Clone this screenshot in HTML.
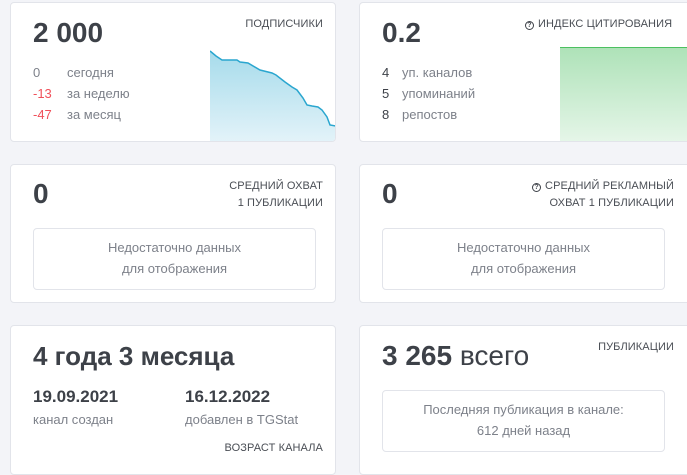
<!DOCTYPE html>
<html><head><meta charset="utf-8"><style>
*{margin:0;padding:0;box-sizing:border-box}
body{width:687px;height:462px;overflow:hidden;background:#f3f4f8;font-family:"Liberation Sans",sans-serif;color:#3d4148;position:relative}
.card{position:absolute;background:#fff;border:1px solid #e2e4ea;border-radius:4px;overflow:hidden}
.a{position:absolute;white-space:nowrap}
.big{font-size:28px;font-weight:bold;color:#3d4148}
.lbl{font-size:11px;color:#4a4e55;text-align:right;line-height:17px;letter-spacing:0.1px}
.g{font-size:13px;color:#7d818a}
.r{color:#f0505a}
.n{font-size:13px;color:#3d4148}
.box{position:absolute;border:1px solid #e2e4ea;border-radius:4px;text-align:center;font-size:13px;color:#7d818a;line-height:21px;padding-top:8px}
.q{display:inline-block;width:9px;height:9px;border:1.3px solid #3d4148;border-radius:50%;font-size:7px;line-height:7px;text-align:center;font-weight:bold;vertical-align:0px;margin-right:4px}
</style></head><body>

<div class="card" style="left:10px;top:2px;width:326px;height:140px">
  <div class="a big" style="left:22px;top:14px">2 000</div>
  <div class="a lbl" style="right:12px;top:13px">ПОДПИСЧИКИ</div>
  <div class="a g" style="left:22px;top:62px">0</div><div class="a g" style="left:56px;top:62px">сегодня</div>
  <div class="a g r" style="left:22px;top:83px">-13</div><div class="a g" style="left:56px;top:83px">за неделю</div>
  <div class="a g r" style="left:22px;top:104px">-47</div><div class="a g" style="left:56px;top:104px">за месяц</div>
  <svg class="a" style="left:199px;top:47px" width="126" height="92" viewBox="210 49 126 92">
    <defs><linearGradient id="b" x1="0" y1="0" x2="0" y2="1"><stop offset="0" stop-color="#a6dbeb"/><stop offset="1" stop-color="#e3f3f9"/></linearGradient></defs>
    <path d="M210 50 L216 55 L222 59 L237 59 L240 61 L248 62 L260 69 L272 72 L276 74 L285 81 L292 86 L297 89 L303 97 L307 104 L312 105 L318 106 L322 109 L327 116 L330 124 L336 125 L336 141 L210 141Z" fill="url(#b)"/>
    <path d="M210 50 L216 55 L222 59 L237 59 L240 61 L248 62 L260 69 L272 72 L276 74 L285 81 L292 86 L297 89 L303 97 L307 104 L312 105 L318 106 L322 109 L327 116 L330 124 L336 125" fill="none" stroke="#2aa6cf" stroke-width="1.5"/>
  </svg>
</div>

<div class="card" style="left:359px;top:2px;width:340px;height:140px">
  <div class="a big" style="left:22px;top:14px">0.2</div>
  <div class="a lbl" style="left:165px;top:13px"><span class="q">?</span>ИНДЕКС ЦИТИРОВАНИЯ</div>
  <div class="a n" style="left:22px;top:62px">4</div><div class="a g" style="left:42px;top:62px">уп. каналов</div>
  <div class="a n" style="left:22px;top:83px">5</div><div class="a g" style="left:42px;top:83px">упоминаний</div>
  <div class="a n" style="left:22px;top:104px">8</div><div class="a g" style="left:42px;top:104px">репостов</div>
  <div class="a" style="left:200px;top:44px;width:140px;height:96px;border-top:1.5px solid #4cc060;background:linear-gradient(#aee2b8,#e6f6e9)"></div>
</div>

<div class="card" style="left:10px;top:164px;width:326px;height:139px">
  <div class="a big" style="left:22px;top:13px">0</div>
  <div class="a lbl" style="right:12px;top:13px">СРЕДНИЙ ОХВАТ<br>1 ПУБЛИКАЦИИ</div>
  <div class="box" style="left:22px;top:63px;width:283px;height:62px">Недостаточно данных<br>для отображения</div>
</div>

<div class="card" style="left:359px;top:164px;width:340px;height:139px">
  <div class="a big" style="left:22px;top:13px">0</div>
  <div class="a lbl" style="left:172px;top:13px;text-align:right;width:142px"><span class="q">?</span>СРЕДНИЙ РЕКЛАМНЫЙ<br>ОХВАТ 1 ПУБЛИКАЦИИ</div>
  <div class="box" style="left:22px;top:63px;width:283px;height:62px">Недостаточно данных<br>для отображения</div>
</div>

<div class="card" style="left:10px;top:325px;width:326px;height:150px">
  <div class="a big" style="left:22px;top:15px;font-size:26px">4 года 3 месяца</div>
  <div class="a" style="left:22px;top:61px;font-size:17px;font-weight:bold">19.09.2021</div>
  <div class="a g" style="left:22px;top:86px">канал создан</div>
  <div class="a" style="left:174px;top:61px;font-size:17px;font-weight:bold">16.12.2022</div>
  <div class="a g" style="left:174px;top:86px">добавлен в TGStat</div>
  <div class="a lbl" style="right:12px;top:114px">ВОЗРАСТ КАНАЛА</div>
</div>

<div class="card" style="left:359px;top:325px;width:340px;height:150px">
  <div class="a big" style="left:22px;top:14px">3 265 <span style="font-weight:normal">всего</span></div>
  <div class="a lbl" style="left:200px;top:13px;width:114px">ПУБЛИКАЦИИ</div>
  <div class="box" style="left:22px;top:64px;width:283px;height:62px">Последняя публикация в канале:<br>612 дней назад</div>
</div>
</body></html>
